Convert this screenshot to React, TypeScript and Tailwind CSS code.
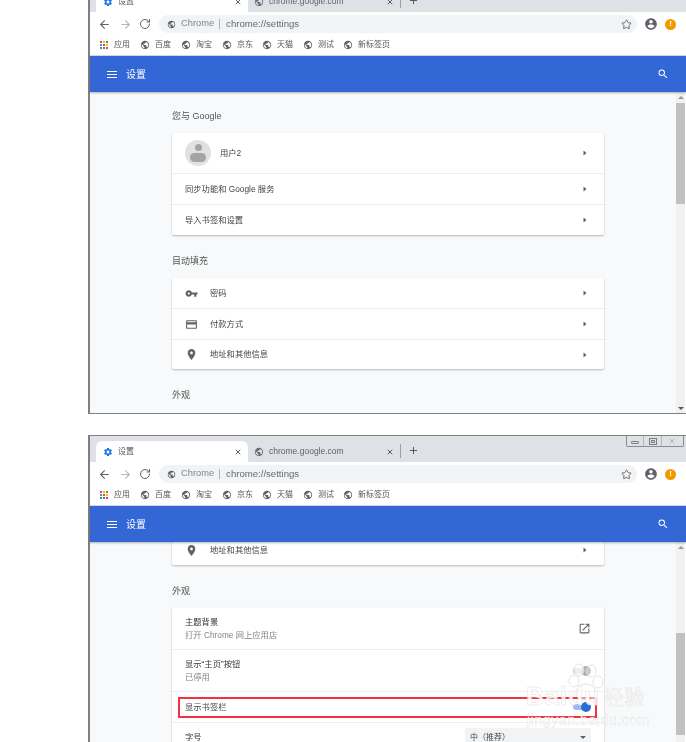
import { ArrowLeft, ArrowRight, Plus, RotateCw, Star, X } from 'lucide-react'

const font = { fontFamily: '"Liberation Sans", "Noto Sans CJK SC", sans-serif' }

const PATHS = {
  globe:
    'M12 2C6.48 2 2 6.48 2 12s4.48 10 10 10 10-4.48 10-10S17.52 2 12 2zm-1 17.93c-3.95-.49-7-3.85-7-7.93 0-.62.08-1.21.21-1.79L9 15v1c0 1.1.9 2 2 2v1.93zm6.9-2.54c-.26-.81-1-1.39-1.9-1.39h-1v-3c0-.55-.45-1-1-1H8v-2h2c.55 0 1-.45 1-1V7h2c1.1 0 2-.9 2-2v-.41c2.93 1.19 5 4.06 5 7.41 0 2.08-.8 3.97-2.1 5.39z',
  gear: 'M19.14 12.94c.04-.3.06-.61.06-.94 0-.32-.02-.64-.07-.94l2.03-1.58a.49.49 0 0 0 .12-.61l-1.92-3.32a.488.488 0 0 0-.59-.22l-2.39.96c-.5-.38-1.03-.7-1.62-.94l-.36-2.54a.484.484 0 0 0-.48-.41h-3.84c-.24 0-.43.17-.47.41l-.36 2.54c-.59.24-1.13.57-1.62.94l-2.39-.96c-.22-.08-.47 0-.59.22L2.74 8.87c-.12.21-.08.47.12.61l2.03 1.58c-.05.3-.09.63-.09.94s.02.64.07.94l-2.03 1.58a.49.49 0 0 0-.12.61l1.92 3.32c.12.22.37.29.59.22l2.39-.96c.5.38 1.03.7 1.62.94l.36 2.54c.05.24.24.41.48.41h3.84c.24 0 .44-.17.47-.41l.36-2.54c.59-.24 1.13-.56 1.62-.94l2.39.96c.22.08.47 0 .59-.22l1.92-3.32c.12-.22.07-.47-.12-.61l-2.01-1.58zM12 15.6c-1.98 0-3.6-1.62-3.6-3.6s1.62-3.6 3.6-3.6 3.6 1.62 3.6 3.6-1.62 3.6-3.6 3.6z',
  key: 'M12.65 10C11.83 7.67 9.61 6 7 6c-3.31 0-6 2.69-6 6s2.69 6 6 6c2.61 0 4.83-1.67 5.65-4H17v4h4v-4h2v-4H12.65zM7 14c-1.1 0-2-.9-2-2s.9-2 2-2 2 .9 2 2-.9 2-2 2z',
  card: 'M20 4H4c-1.11 0-1.99.89-1.99 2L2 18c0 1.11.89 2 2 2h16c1.11 0 2-.89 2-2V6c0-1.11-.89-2-2-2zm0 14H4v-6h16v6zm0-10H4V6h16v2z',
  place:
    'M12 2C8.13 2 5 5.13 5 9c0 5.25 7 13 7 13s7-7.75 7-13c0-3.87-3.13-7-7-7zm0 9.5c-1.38 0-2.5-1.12-2.5-2.5s1.12-2.5 2.5-2.5 2.5 1.12 2.5 2.5-1.12 2.5-2.5 2.5z',
  open: 'M19 19H5V5h7V3H5c-1.11 0-2 .9-2 2v14c0 1.1.89 2 2 2h14c1.1 0 2-.9 2-2v-7h-2v7zM14 3v2h3.59l-9.83 9.83 1.41 1.41L19 6.41V10h2V3h-7z',
  account:
    'M12 2C6.48 2 2 6.48 2 12s4.48 10 10 10 10-4.48 10-10S17.52 2 12 2zm0 3c1.66 0 3 1.34 3 3s-1.34 3-3 3-3-1.34-3-3 1.34-3 3-3zm0 14.2c-2.5 0-4.71-1.28-6-3.22.03-1.99 4-3.08 6-3.08 1.99 0 5.97 1.09 6 3.08-1.29 1.94-3.5 3.22-6 3.22z',
  search:
    'M15.5 14h-.79l-.28-.27A6.47 6.47 0 0 0 16 9.5 6.5 6.5 0 1 0 9.5 16c1.61 0 3.09-.59 4.23-1.57l.27.28v.79l5 4.99L20.49 19l-4.99-5zm-6 0C7.01 14 5 11.99 5 9.5S7.01 5 9.5 5 14 7.01 14 9.5 11.99 14 9.5 14z',
}

function Mat({ d, size, className }: { d: string; size: number; className?: string }) {
  return (
    <svg width={size} height={size} viewBox="0 0 24 24" fill="currentColor" className={`shrink-0 ${className ?? ''}`}>
      <path d={d} />
    </svg>
  )
}

function Caret() {
  return (
    <svg width="4" height="6" viewBox="0 0 4 6" className="shrink-0 text-[#5f6368]" fill="currentColor">
      <path d="M0.5 0.5 3.5 3 0.5 5.5z" />
    </svg>
  )
}

function AppsGrid() {
  const colors = ['#ea4335', '#fbbc05', '#34a853', '#4285f4', '#ea4335', '#fbbc05', '#34a853', '#4285f4', '#ea4335']
  return (
    <div className="grid h-[8px] w-[8px] shrink-0 grid-cols-3 gap-[1px]">
      {colors.map((c, i) => (
        <span key={i} className="h-[2px] w-[2px]" style={{ backgroundColor: c }} />
      ))}
    </div>
  )
}

function Bookmark({ label, w }: { label: string; w: string }) {
  return (
    <div className={`flex items-center gap-[5px] ${w}`}>
      <Mat d={PATHS.globe} size={10} className="text-[#5f6368]" />
      <span className="text-[8px] text-[#555]">{label}</span>
    </div>
  )
}

function TabStrip({ controls }: { controls?: boolean }) {
  return (
    <div className="relative flex h-[26px] shrink-0 bg-[#dee1e6] pt-[5px]">
      <div className="ml-[6px] flex w-[152px] items-center rounded-t-[6px] bg-white pl-[7px] pr-[6px]">
        <Mat d={PATHS.gear} size={10} className="text-[#1a73e8]" />
        <span className="ml-[5px] text-[8px] text-[#555]">设置</span>
        <X size={8} strokeWidth={2.5} className="ml-auto text-[#3c4043]" />
      </div>
      <div className="flex w-[152px] items-center pl-[6px] pr-[6px]">
        <Mat d={PATHS.globe} size={10} className="text-[#6b6f74]" />
        <span className="ml-[5px] text-[8.5px] text-[#5f6368]">chrome.google.com</span>
        <X size={8} strokeWidth={2.5} className="ml-auto text-[#3c4043]" />
      </div>
      <div className="mb-[4px] mt-[3px] w-[1px] bg-[#9aa0a6]" />
      <Plus size={11} strokeWidth={1.8} className="ml-[7px] mt-[4px] text-[#3c4043]" />
      {controls && (
        <div className="absolute right-[2px] top-0 flex h-[11px] w-[58px] rounded-b-[2px] border border-t-0 border-[#8a8d91] text-[#7a7d82]">
          <div className="flex flex-1 items-end justify-center pb-[2px]">
            <span className="h-[3px] w-[8px] rounded-[1px] border border-current" />
          </div>
          <div className="flex flex-1 items-center justify-center border-l border-[#b4b7bb]">
            <span className="flex h-[7px] w-[8px] items-center justify-center border border-current">
              <span className="h-[3px] w-[4px] border border-current" />
            </span>
          </div>
          <div className="flex flex-[1.3] items-center justify-center border-l border-[#b4b7bb]">
            <X size={8} strokeWidth={1.5} />
          </div>
        </div>
      )}
    </div>
  )
}

function Toolbar() {
  return (
    <div className="flex h-[22px] shrink-0 items-center bg-white pl-[8px] pt-[2px]">
      <ArrowLeft size={13} strokeWidth={2} className="text-[#5f6368]" />
      <ArrowRight size={13} strokeWidth={2} className="ml-[8px] text-[#b4b7bb]" />
      <RotateCw size={12} strokeWidth={2} className="ml-[7px] text-[#5f6368]" />
      <div className="ml-[8px] flex h-[18px] w-[478px] items-center rounded-full bg-[#f1f3f4] pl-[8px] pr-[5px]">
        <Mat d={PATHS.globe} size={9} className="text-[#5f6368]" />
        <span className="ml-[5px] text-[9.3px] text-[#80868b]">Chrome</span>
        <span className="ml-[5px] h-[10px] w-[1px] bg-[#b0b3b7]" />
        <span className="ml-[6px] text-[9.6px] text-[#666b70]">chrome://settings</span>
        <Star size={11} strokeWidth={2} className="ml-auto text-[#5f6368]" />
      </div>
      <Mat d={PATHS.account} size={14} className="ml-[7px] text-[#5f6368]" />
      <span className="ml-[7px] flex h-[11px] w-[11px] items-center justify-center rounded-full bg-[#f29900] text-[8px] font-bold leading-none text-white">
        !
      </span>
    </div>
  )
}

function Bookmarks() {
  return (
    <div className="flex h-[22px] shrink-0 items-center border-b border-[#dadce0] bg-white pl-[10px]">
      <div className="flex w-[40px] items-center gap-[6px]">
        <AppsGrid />
        <span className="text-[8px] text-[#555]">应用</span>
      </div>
      <Bookmark label="百度" w="w-[41px]" />
      <Bookmark label="淘宝" w="w-[41px]" />
      <Bookmark label="京东" w="w-[40px]" />
      <Bookmark label="天猫" w="w-[41px]" />
      <Bookmark label="测试" w="w-[40px]" />
      <Bookmark label="新标签页" w="w-[60px]" />
    </div>
  )
}

function HeaderBar() {
  return (
    <div className="relative z-10 flex h-[36px] shrink-0 items-center bg-[#3367d6] pl-[17px] pr-[17px] shadow-[0_1px_2px_rgba(0,0,0,0.3)]">
      <div className="flex w-[10px] flex-col gap-[2px]">
        <span className="h-[1px] bg-white" />
        <span className="h-[1px] bg-white" />
        <span className="h-[1px] bg-white" />
      </div>
      <span className="ml-[9px] mt-[1px] text-[10px] text-white">设置</span>
      <Mat d={PATHS.search} size={12} className="ml-auto text-white" />
    </div>
  )
}

function Scrollbar({ before, thumb }: { before: string; thumb: string }) {
  return (
    <div className="flex w-[9px] shrink-0 flex-col bg-[#f1f1f1]">
      <div className="flex h-[10px] shrink-0 items-center justify-center">
        <span className="h-0 w-0 border-x-[3px] border-b-[3px] border-x-transparent border-b-[#999]" />
      </div>
      <div className={`shrink-0 ${before}`} />
      <div className={`shrink-0 bg-[#c1c1c1] ${thumb}`} />
      <div className="mt-auto flex h-[10px] shrink-0 items-center justify-center">
        <span className="h-0 w-0 border-x-[3px] border-t-[3px] border-x-transparent border-t-[#555]" />
      </div>
    </div>
  )
}

function Section({ title, className }: { title: string; className?: string }) {
  return <div className={`h-[14px] text-[9px] leading-[14px] text-[#555] ${className ?? ''}`}>{title}</div>
}

function Card({ children }: { children: React.ReactNode }) {
  return <div className="w-[432px] rounded-[2px] bg-white shadow-[0_1px_2px_rgba(60,64,67,0.35)]">{children}</div>
}

function Row({ h, icon, label, first }: { h: string; icon?: string; label: string; first?: boolean }) {
  return (
    <div className={`flex items-center pl-[13px] pr-[17px] ${h} ${first ? '' : 'border-t border-[#eeeeee]'}`}>
      {icon && (
        <span className="flex w-[25px] shrink-0">
          <Mat d={icon} size={13} className="text-[#5f6368]" />
        </span>
      )}
      <span className="text-[8.3px] text-[#444]">{label}</span>
      <span className="ml-auto">
        <Caret />
      </span>
    </div>
  )
}

function TwoLineRow({
  title,
  sub,
  right,
  h,
  first,
}: {
  title: string
  sub: string
  right: React.ReactNode
  h: string
  first?: boolean
}) {
  return (
    <div className={`flex items-center pl-[13px] pr-[13px] ${h} ${first ? '' : 'border-t border-[#eeeeee]'}`}>
      <div className="flex flex-col">
        <span className="text-[8.3px] leading-[13px] text-[#333]">{title}</span>
        <span className="text-[8.3px] leading-[13px] text-[#80868b]">{sub}</span>
      </div>
      <span className="ml-auto">{right}</span>
    </div>
  )
}

function Toggle({ on }: { on?: boolean }) {
  return (
    <span className="relative flex h-[10px] w-[18px] items-center">
      <span className={`h-[6px] w-[16px] rounded-full ${on ? 'bg-[#9db9f0]' : 'bg-[#c4c7cb]'}`} />
      <span
        className={`absolute top-0 h-[10px] w-[10px] rounded-full ${on ? 'right-0 bg-[#2f6bd8]' : 'right-0 bg-[#a8abae]'}`}
      />
    </span>
  )
}

function FirstPage() {
  return (
    <div className="flex min-h-0 flex-1 bg-[#f8f9fa]">
      <div className="min-w-0 flex-1 overflow-hidden pl-[82px] pt-[17px]">
        <Section title="您与 Google" className="mb-[10px]" />
        <Card>
          <div className="flex h-[40px] items-center pl-[13px] pr-[17px]">
            <span className="relative flex h-[26px] w-[26px] shrink-0 justify-center overflow-hidden rounded-full bg-[#e1e1e1]">
              <span className="absolute top-[4px] h-[7px] w-[7px] rounded-full bg-[#a4a4a4]" />
              <span className="absolute top-[13px] h-[9px] w-[16px] rounded-full bg-[#a4a4a4]" />
            </span>
            <span className="ml-[9px] text-[8.3px] text-[#444]">用户2</span>
            <span className="ml-auto">
              <Caret />
            </span>
          </div>
          <Row h="h-[31px]" label="同步功能和 Google 服务" />
          <Row h="h-[31px]" label="导入书签和设置" />
        </Card>
        <Section title="目动填充" className="mb-[10px] mt-[19px]" />
        <Card>
          <Row h="h-[30px]" icon={PATHS.key} label="密码" first />
          <Row h="h-[31px]" icon={PATHS.card} label="付款方式" />
          <Row h="h-[30px]" icon={PATHS.place} label="地址和其他信息" />
        </Card>
        <Section title="外观" className="mt-[19px]" />
      </div>
      <Scrollbar before="h-[1px]" thumb="h-[101px]" />
      <div className="w-[1px] shrink-0 bg-white" />
    </div>
  )
}

function SecondPage() {
  return (
    <div className="flex min-h-0 flex-1 bg-[#f8f9fa]">
      <div className="min-w-0 flex-1 overflow-hidden pl-[82px]">
        <div className="-mt-[7px]">
          <Card>
            <Row h="h-[30px]" icon={PATHS.place} label="地址和其他信息" first />
          </Card>
          <Section title="外观" className="mb-[10px] mt-[19px]" />
          <Card>
            <TwoLineRow
              first
              h="h-[41px]"
              title="主题背景"
              sub="打开 Chrome 网上应用店"
              right={<Mat d={PATHS.open} size={13} className="text-[#5f6368]" />}
            />
            <TwoLineRow h="h-[42px]" title="显示“主页”按钮" sub="已停用" right={<Toggle />} />
            <div className="flex h-[31px] items-center border-t border-[#eeeeee] pl-[13px] pr-[13px]">
              <span className="text-[8.3px] text-[#444]">显示书签栏</span>
              <span className="ml-auto">
                <Toggle on />
              </span>
            </div>
            <div className="flex h-[30px] items-center border-t border-[#eeeeee] pl-[13px] pr-[13px]">
              <span className="text-[8.3px] text-[#333]">字号</span>
              <div className="ml-auto flex h-[20px] w-[126px] items-center rounded-[3px] bg-[#f1f3f4] pl-[5px] pr-[5px]">
                <span className="text-[8px] text-[#444]">中（推荐）</span>
                <span className="ml-auto h-0 w-0 border-x-[3px] border-t-[3px] border-x-transparent border-t-[#5f6368]" />
              </div>
            </div>
          </Card>
        </div>
      </div>
      <Scrollbar before="h-[81px]" thumb="h-[102px]" />
      <div className="w-[1px] shrink-0 bg-white" />
    </div>
  )
}

function Watermark() {
  return (
    <div className="pointer-events-none absolute left-[526px] top-[662px] h-[70px] w-[124px]">
      <svg
        width="38"
        height="40"
        viewBox="0 0 38 40"
        className="absolute left-[41px] top-[0px]"
        fill="none"
        stroke="#dcdcdc"
        strokeWidth="0.8"
      >
        <ellipse cx="7" cy="19" rx="5" ry="6" fill="#ffffffb0" />
        <ellipse cx="12" cy="8" rx="5" ry="6" fill="#ffffffb0" />
        <ellipse cx="24" cy="9" rx="5" ry="6" fill="#ffffff60" />
        <ellipse cx="31" cy="20" rx="5" ry="6" fill="#ffffffb0" />
        <path d="M19 22c6 0 10 5 10 10 0 4-4 6-10 6s-10-2-10-6c0-5 4-10 10-10z" fill="#ffffff70" />
      </svg>
      <div
        className="absolute left-0 top-[20px] flex items-baseline text-[25px] font-bold leading-[28px] tracking-[1px] text-[#ffffffd0]"
        style={{ WebkitTextStroke: '0.4px #dcdcdc' }}
      >
        <span>Baidu</span>
        <span className="ml-[3px] text-[20px] font-normal">经验</span>
      </div>
      <div
        className="absolute left-[1px] top-[50px] text-[14px] leading-[16px] tracking-[0.6px] text-[#ffffffc0]"
        style={{ WebkitTextStroke: '0.3px #dcdcdc' }}
      >
        jingyan.baidu.com
      </div>
    </div>
  )
}

export default function App() {
  return (
    <div className="relative h-[742px] overflow-hidden bg-white blur-[0.35px]" style={font}>
      <div className="-mt-[14px] ml-[88px] flex flex-col gap-[21px]">
        <div className="flex h-[428px] flex-col border-b border-l-2 border-[#808080]">
          <TabStrip />
          <Toolbar />
          <Bookmarks />
          <HeaderBar />
          <FirstPage />
        </div>
        <div className="flex h-[322px] flex-col border-l-2 border-t border-[#808080]">
          <TabStrip controls />
          <Toolbar />
          <Bookmarks />
          <HeaderBar />
          <SecondPage />
        </div>
      </div>
      {/* 红框标注 */}
      <div className="pointer-events-none absolute left-[178px] top-[697px] h-[21px] w-[419px] border-2 border-[#f2333f]" />
      <Watermark />
    </div>
  )
}
